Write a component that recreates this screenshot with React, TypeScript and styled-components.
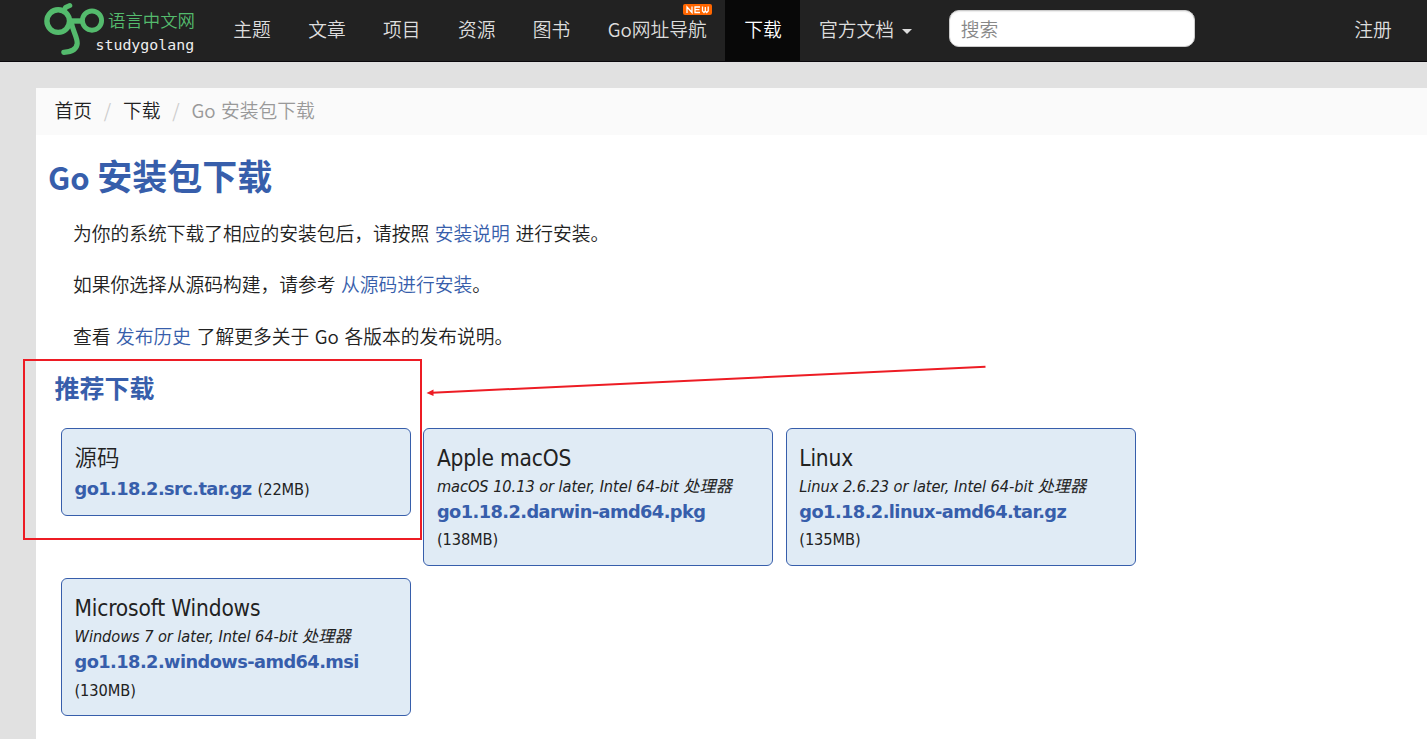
import React from "react";
import styled, { createGlobalStyle } from "styled-components";

const ui = `"Noto Sans CJK SC", "Noto Sans", sans-serif`;
const tahoma = `"DejaVu Sans Condensed", "Noto Sans CJK SC", sans-serif`;
const blue = "#375eab";

const GlobalStyle = createGlobalStyle`
  * { box-sizing: border-box; }
  body {
    margin: 0;
    background: #e1e1e1;
    color: #222;
    font: 18.75px/26px ${ui};
    overflow: hidden;
  }
  a { text-decoration: none; }
`;

const Page = styled.div`
  position: relative;
  height: 739px;
  overflow: hidden;
  display: flex;
  flex-direction: column;
`;

const Navbar = styled.header`
  flex: none;
  display: flex;
  height: 62px;
  background: #222;
  border-bottom: 1px solid #0a080c;
`;

const Brand = styled.a`
  position: relative;
  width: 214.6px;
  flex: none;
`;

const LogoMark = styled.svg`
  position: absolute;
  left: 43px;
  top: 0;
`;

const LogoName = styled.span`
  position: absolute;
  left: 108px;
  top: 7px;
  font-size: 17.4px;
  line-height: 26px;
  font-weight: 350;
  color: #54bb6d;
  white-space: nowrap;
`;

const LogoDomain = styled.span`
  position: absolute;
  left: 95.5px;
  top: 35px;
  font: 14.9px/20px "DejaVu Sans Mono", monospace;
  color: #eee;
`;

const NavLink = styled.a<{ $active?: boolean }>`
  position: relative;
  display: flex;
  align-items: center;
  height: 61px;
  padding: 0 18.7px 4px;
  font-weight: 350;
  white-space: nowrap;
  color: ${(p) => (p.$active ? "#fff" : "#ddd")};
  background: ${(p) => (p.$active ? "#080808" : "transparent")};
`;

const NewBadge = styled.svg`
  position: absolute;
  left: 94px;
  top: 4px;
`;

const Caret = styled.span`
  margin: 5px 0 0 8px;
  border: 5px solid transparent;
  border-top-color: #ddd;
  border-bottom: 0;
`;

const Search = styled.input`
  margin: 10px 0 0 18px;
  width: 246px;
  height: 37px;
  padding: 0 11px 1px;
  border: 1px solid #ccc;
  border-radius: 10px;
  box-shadow: inset 0 1px 1px rgba(0, 0, 0, 0.08);
  font: 350 18.75px ${ui};
  &::placeholder { color: #888; opacity: 1; }
`;

const Register = styled(NavLink)`
  margin-left: auto;
  margin-right: 16.5px;
`;

const Main = styled.main`
  flex: 1;
  margin: 26px 0 0 36px;
  background: #fff;
`;

const Breadcrumb = styled.nav`
  display: flex;
  height: 47px;
  padding: 9.4px 18.5px;
  background: #fafafa;
  font-weight: 350;
  word-spacing: 1.3px;
  color: #999;
`;

const Crumb = styled.a`
  color: #222;
`;

const Slash = styled.span`
  width: 31px;
  text-align: center;
  color: #ccc;
`;

const Title = styled.h1`
  display: flex;
  align-items: baseline;
  gap: 7.5px;
  height: 46px;
  margin: 17px 0 1.5px 12px;
  font: 700 35px/46px ${ui};
  color: ${blue};
`;

const TitleLatin = styled.span`
  font-size: 31px;
`;

const Intro = styled.p`
  margin: 0;
  padding: 20px 0 5px 37px;
  height: 51.5px;
  font-weight: 350;
  word-spacing: 1.4px;
  white-space: pre;
  a { color: ${blue}; }
`;

const Subtitle = styled.h2`
  margin: 15.5px 0 0 18.5px;
  font-size: 25px;
  line-height: 34px;
  color: ${blue};
`;

const Cards = styled.section`
  display: flex;
  flex-wrap: wrap;
  align-items: flex-start;
  gap: 12.5px 12.4px;
  width: 1100px;
  margin: 24.2px 0 0 25px;
`;

const Card = styled.a`
  width: 350px;
  min-height: 87.3px;
  padding: 13.4px 12.5px 10.5px;
  border: 1px solid ${blue};
  border-radius: 6px;
  background: #e0ebf5;
  color: #222;
  font-family: ${tahoma};
`;

const Platform = styled.div`
  height: 33px;
  font-size: 22.5px;
  line-height: 33px;
  letter-spacing: -0.17px;
  font-weight: 400;
`;

const PlatformCjk = styled.span`
  display: block;
  height: 33px;
  line-height: 29.5px;
  font-family: ${ui};
  font-weight: 350;
  letter-spacing: 0;
`;

const Requirement = styled.div`
  height: 24px;
  font-size: 16.25px;
  line-height: 24px;
  font-style: italic;
  letter-spacing: -0.07px;
  white-space: nowrap;
`;

const FileRow = styled.div<{ $offset?: boolean }>`
  display: flex;
  flex-wrap: wrap;
  align-items: baseline;
  gap: 1.5px 6px;
  padding-top: ${(p) => (p.$offset ? "1.2px" : "0")};
  line-height: 26.75px;
`;

const FileName = styled.span`
  font-family: "DejaVu Sans", sans-serif;
  font-size: 17.8px;
  font-weight: 700;
  letter-spacing: -0.57px;
  color: ${blue};
`;

const FileSize = styled.span`
  font-size: 16.25px;
  letter-spacing: -0.1px;
`;

const Annotation = styled.svg`
  position: absolute;
  left: 0;
  top: 0;
  pointer-events: none;
`;

const downloads = [
  { platform: <PlatformCjk>源码</PlatformCjk>, file: "go1.18.2.src.tar.gz", size: "22MB" },
  { platform: "Apple macOS", req: "macOS 10.13 or later, Intel 64-bit 处理器", file: "go1.18.2.darwin-amd64.pkg", size: "138MB" },
  { platform: "Linux", req: "Linux 2.6.23 or later, Intel 64-bit 处理器", file: "go1.18.2.linux-amd64.tar.gz", size: "135MB" },
  { platform: "Microsoft Windows", req: "Windows 7 or later, Intel 64-bit 处理器", file: "go1.18.2.windows-amd64.msi", size: "130MB" },
];

export default function App() {
  return (
    <Page>
      <GlobalStyle />
      <Navbar>
        <Brand>
          <LogoMark width="64" height="58" fill="none" stroke="#54bb6d">
            <circle cx="15.2" cy="21.1" r="11.3" strokeWidth="5.4" />
            <circle cx="49" cy="20.6" r="9.6" strokeWidth="4.9" />
            <path d="M26 21H40" strokeWidth="5.4" />
            <path d="M21 11L22.5 7.5Q24.5 6.5 26.8 5.5" strokeWidth="5" strokeLinecap="round" strokeLinejoin="round" />
            <path d="M28 21C29.5 31 34.5 37 34.2 43.5Q33.5 51.5 20.8 52.4" strokeWidth="5.2" strokeLinecap="round" />
          </LogoMark>
          <LogoName>语言中文网</LogoName>
          <LogoDomain>studygolang</LogoDomain>
        </Brand>
        {["主题", "文章", "项目", "资源", "图书"].map((t) => (
          <NavLink key={t}>{t}</NavLink>
        ))}
        <NavLink>
          Go网址导航
          <NewBadge width="29" height="11">
            <rect width="29" height="11" rx="2" fill="#ff6600" />
            <path d="M4 9V3L9 8.5V2.5M17 3H12V8.5H17M12 5.7H16.5M19.5 2.5V7L21 8.5L22.3 7V3M22.3 7L23.7 8.5L25.2 7V2.5" fill="none" stroke="#fff" strokeWidth="1.3" />
          </NewBadge>
        </NavLink>
        <NavLink $active>下载</NavLink>
        <NavLink>
          官方文档
          <Caret />
        </NavLink>
        <Search placeholder="搜索" />
        <Register>注册</Register>
      </Navbar>
      <Main>
        <Breadcrumb>
          <Crumb>首页</Crumb>
          <Slash>/</Slash>
          <Crumb>下载</Crumb>
          <Slash>/</Slash>
          <span>Go 安装包下载</span>
        </Breadcrumb>
        <Title>
          <TitleLatin>Go</TitleLatin> 安装包下载
        </Title>
        <Intro>为你的系统下载了相应的安装包后，请按照 <a>安装说明</a> 进行安装。</Intro>
        <Intro>如果你选择从源码构建，请参考 <a>从源码进行安装</a>。</Intro>
        <Intro>查看 <a>发布历史</a> 了解更多关于 Go 各版本的发布说明。</Intro>
        <Subtitle>推荐下载</Subtitle>
        <Cards>
          {downloads.map((d) => (
            <Card key={d.file}>
              <Platform>{d.platform}</Platform>
              {d.req && <Requirement>{d.req}</Requirement>}
              <FileRow $offset={!d.req}>
                <FileName>{d.file}</FileName>
                <FileSize>({d.size})</FileSize>
              </FileRow>
            </Card>
          ))}
        </Cards>
      </Main>
      <Annotation width="1427" height="739" fill="none" stroke="#ed1c24" strokeWidth="2">
        <rect x="24" y="360" width="397" height="179" />
        <path d="M985.5 366.8L432 392.7" />
        <path d="M426.5 393L433.5 389.5V396Z" fill="#ed1c24" stroke="none" />
      </Annotation>
    </Page>
  );
}
